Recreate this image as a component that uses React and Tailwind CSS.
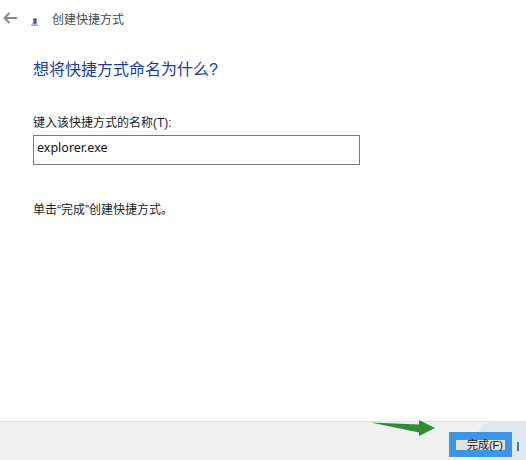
const cjk = { fontFamily: '"Liberation Sans", "Noto Sans CJK SC", sans-serif' };

export default function App() {
  return (
    <div className="relative flex h-[460px] w-[526px] flex-col overflow-hidden bg-white" style={cjk}>
      <div className="flex h-[38px] items-center pl-[3px]">
        <svg width="14" height="12" viewBox="0 0 14 12" className="mb-[2px]">
          <path d="M6.5 1 L1.5 6 L6.5 11 M2 6 H14" fill="none" stroke="#8a8a8a" strokeWidth="2" />
        </svg>
        <svg width="8" height="8" viewBox="0 0 8 8" className="ml-[14px] mt-[5px]">
          <rect x="0" y="6.5" width="7" height="1.5" fill="#9aa6c8" />
          <path d="M1.5 0.5 H6.5 L5.5 2 V4.5 L6.5 5.5 H4.5 L3.5 7 L3 5.5 H1 L2.5 4 V2 Z" fill="#3a58a0" />
        </svg>
        <span className="ml-[13px] mt-px text-[12px] leading-[16px] text-[#4a4a4a]">创建快捷方式</span>
      </div>
      <h1 className="ml-[33px] mt-[21px] text-[16px] font-normal leading-[22px] text-[#1a3ea0]">想将快捷方式命名为什么?</h1>
      <label className="ml-[33px] mt-[34px] text-[12px] leading-[16px] text-[#222]">键入该快捷方式的名称(T):</label>
      <div className="ml-[33px] mt-[4px] h-[30px] w-[327px] border border-[#7a7a7a] px-[3px] pt-[4px] text-[12.5px] leading-[16px] text-[#111]" style={{ fontFamily: '"Noto Sans", sans-serif' }}>
        explorer.exe
      </div>
      <p className="ml-[33px] mt-[37px] text-[12px] leading-[16px] text-[#222]">单击“完成”创建快捷方式。</p>
      <div className="relative mt-auto flex h-[39px] items-start justify-end overflow-hidden border-t border-[#e2e2e2] bg-[#f0f0f0] pr-[14px] pt-[10px]">
        <div className="absolute left-[478px] top-0 h-[39px] w-[48px] rounded-tl-[14px] bg-[#dfe5ec] opacity-80" />
        <div className="relative flex h-[25px] w-[63px] items-center justify-center bg-[#3c94e4]">
          <div className="flex h-[10px] w-[49px] items-center justify-end bg-[#e2e2e2] pr-[2px] text-[11px] leading-[10px] text-[#111]">完成(F)</div>
        </div>
        <div className="absolute left-[517px] top-[20px] h-[9px] w-[2px] bg-[#2a80d8]" />
      </div>
      <svg width="66" height="16" viewBox="0 0 66 16" className="absolute left-[371px] top-[420px]">
        <path d="M0 2.5 L48 4.5 L48 0 L64 8 L48 16 L48 12.5 Z" fill="#2e8b36" />
      </svg>
    </div>
  );
}
